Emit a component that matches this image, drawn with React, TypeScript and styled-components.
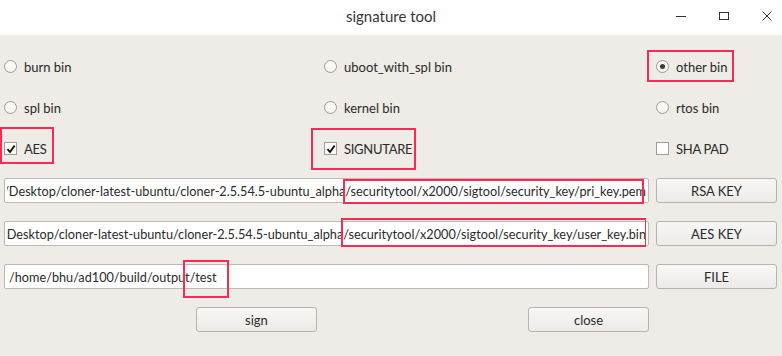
import React from "react";
import styled, { createGlobalStyle } from "styled-components";

const Global = createGlobalStyle`
  html, body { margin: 0; padding: 0; background: #efebe7; }
  body { font-family: "Lato", "Noto Sans", sans-serif; }
  * { box-sizing: border-box; }
`;

const RED = "#fb2a55";

const Window = styled.div`
  width: 782px;
  height: 356px;
  background: #efebe7;
  display: flex;
  flex-direction: column;
  overflow: hidden;
`;

const TitleBar = styled.div`
  height: 35px;
  background: #ffffff;
  display: grid;
  grid-template-columns: 1fr auto 1fr;
  align-items: center;
`;

const Title = styled.div`
  grid-column: 2;
  font-size: 15px;
  color: #353535;
  padding-bottom: 3px;
`;

const Controls = styled.div`
  grid-column: 3;
  justify-self: end;
  display: flex;
  align-items: center;
  gap: 33px;
  padding-right: 10px;
  padding-bottom: 3px;
`;

const CtlIcon = styled.svg`
  width: 10px;
  height: 10px;
  display: block;
`;

const Body = styled.div`
  padding: 19px 5px 0 4px;
  display: flex;
  flex-direction: column;
`;

const Options = styled.div`
  display: grid;
  grid-template-columns: 320px 332px 1fr;
  grid-auto-rows: 25px;
  row-gap: 16px;
`;

const Option = styled.label`
  display: flex;
  align-items: center;
  gap: 7px;
  font-size: 13px;
  color: #2a2a2a;
  height: 25px;
  white-space: nowrap;
`;

const Mark = styled.span<{ $t: number; $r: number; $b: number; $l: number }>`
  position: relative;
  display: inline-flex;
  align-items: center;
  gap: inherit;
  &::after {
    content: "";
    position: absolute;
    top: ${(p) => p.$t}px;
    right: ${(p) => p.$r}px;
    bottom: ${(p) => p.$b}px;
    left: ${(p) => p.$l}px;
    border: 2px solid ${RED};
    pointer-events: none;
  }
`;

const Radio = styled.span<{ $on?: boolean }>`
  width: 13px;
  height: 13px;
  border-radius: 50%;
  border: 1px solid #9e9a96;
  background: linear-gradient(#ffffff, #f4f3f2);
  display: flex;
  align-items: center;
  justify-content: center;
  flex: none;
  &::before {
    content: "";
    width: 5px;
    height: 5px;
    border-radius: 50%;
    background: #3a3a3a;
    display: ${(p) => (p.$on ? "block" : "none")};
  }
`;

const Check = styled.span`
  width: 13px;
  height: 13px;
  border: 1px solid #a19d99;
  background: #ffffff;
  display: flex;
  align-items: center;
  justify-content: center;
  flex: none;
`;

const Caps = styled.span`
  letter-spacing: -0.3px;
`;

const Fields = styled.div`
  margin-top: 17px;
  display: flex;
  flex-direction: column;
  gap: 18px;
`;

const FieldRow = styled.div`
  display: grid;
  grid-template-columns: 645px 1fr;
  column-gap: 7px;
  height: 25px;
`;

const Field = styled.div<{ $end?: boolean }>`
  height: 25px;
  background: #ffffff;
  border: 1px solid #bdb9b5;
  border-radius: 2px;
  display: flex;
  align-items: center;
  padding: 0 ${(p) => (p.$end ? 2 : 4)}px;
  font-size: 12.7px;
  color: #2a2a2a;
  white-space: nowrap;
`;

const Clip = styled.div<{ $end?: boolean }>`
  clip-path: inset(-14px 0 -14px 0);
  width: 100%;
  height: 100%;
  display: flex;
  align-items: center;
  justify-content: ${(p) => (p.$end ? "flex-end" : "flex-start")};
`;

const Button = styled.button`
  height: 25px;
  border: 1px solid #b7b3af;
  border-radius: 3px;
  background: linear-gradient(#f8f7f6, #ecebe9);
  font-family: inherit;
  font-size: 13px;
  color: #2a2a2a;
  padding: 0;
  width: 121px;
`;

const Actions = styled.div`
  margin-top: 0px;
  display: grid;
  grid-template-columns: 192px 121px 211px 121px;
  height: 25px;
`;

const CheckMark = () => (
  <svg width="10" height="10" viewBox="0 0 10 10">
    <path d="M1.5 5.2 L4 8 L8.6 1.6" fill="none" stroke="#111" strokeWidth="1.8" />
  </svg>
);

export default function App() {
  return (
    <Window>
      <Global />
      <TitleBar>
        <Title>signature tool</Title>
        <Controls>
          <CtlIcon viewBox="0 0 10 10">
            <path d="M0 5.5 H10" stroke="#333" strokeWidth="1" />
          </CtlIcon>
          <CtlIcon viewBox="0 0 10 10">
            <rect x="0.5" y="1.5" width="9" height="7" fill="none" stroke="#333" strokeWidth="1" />
          </CtlIcon>
          <CtlIcon viewBox="0 0 10 10">
            <path d="M0.5 0.5 L9.5 9.5 M9.5 0.5 L0.5 9.5" stroke="#333" strokeWidth="1" />
          </CtlIcon>
        </Controls>
      </TitleBar>
      <Body>
        <Options>
          <Option>
            <Radio />
            burn bin
          </Option>
          <Option>
            <Radio />
            uboot_with_spl bin
          </Option>
          <Option>
            <Mark $t={-9} $r={-7} $b={-7} $l={-9}>
              <Radio $on />
              other bin
            </Mark>
          </Option>
          <Option>
            <Radio />
            spl bin
          </Option>
          <Option>
            <Radio />
            kernel bin
          </Option>
          <Option>
            <Radio />
            rtos bin
          </Option>
          <Option>
            <Mark $t={-14} $r={-8} $b={-7} $l={-4}>
              <Check>
                <CheckMark />
              </Check>
              <Caps>AES</Caps>
            </Mark>
          </Option>
          <Option>
            <Mark $t={-13} $r={-4} $b={-13} $l={-13}>
              <Check>
                <CheckMark />
              </Check>
              <Caps>SIGNUTARE</Caps>
            </Mark>
          </Option>
          <Option>
            <Check />
            <Caps>SHA PAD</Caps>
          </Option>
        </Options>
        <Fields>
          <FieldRow>
            <Field $end>
              <Clip $end>
                /home/bhu/Desktop/cloner-latest-ubuntu/cloner-2.5.54.5-ubuntu_alpha
                <Mark $t={-4} $r={2} $b={-5} $l={-2}>/securitytool/x2000/sigtool/security_key/pri_key.pem</Mark>
              </Clip>
            </Field>
            <Button>RSA KEY</Button>
          </FieldRow>
          <FieldRow>
            <Field $end>
              <Clip $end>
                /home/bhu/Desktop/cloner-latest-ubuntu/cloner-2.5.54.5-ubuntu_alpha
                <Mark $t={-8} $r={-1} $b={-5} $l={-2}>/securitytool/x2000/sigtool/security_key/user_key.bin</Mark>
              </Clip>
            </Field>
            <Button>AES KEY</Button>
          </FieldRow>
          <FieldRow>
            <Field>
              /home/bhu/ad100/build/outpu
              <Mark $t={-9} $r={-13} $b={-13} $l={-2}>t/test</Mark>
            </Field>
            <Button>FILE</Button>
          </FieldRow>
          <Actions>
            <span />
            <Button>sign</Button>
            <span />
            <Button>close</Button>
          </Actions>
        </Fields>
      </Body>
    </Window>
  );
}
